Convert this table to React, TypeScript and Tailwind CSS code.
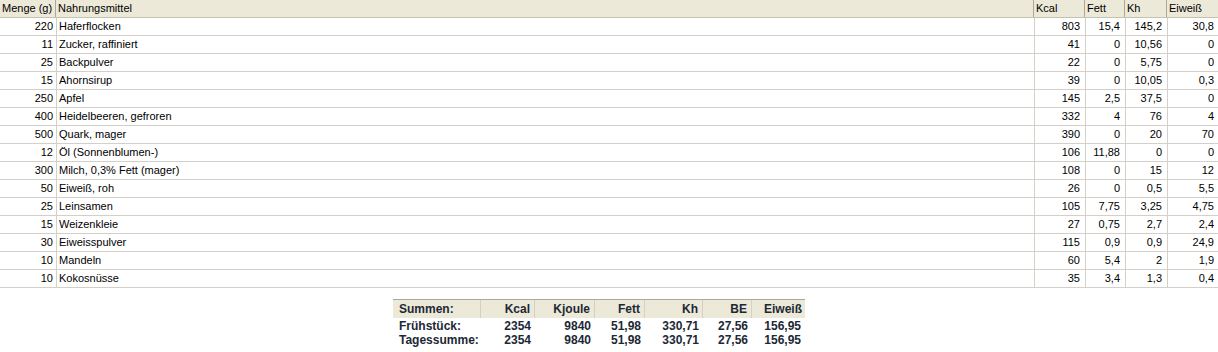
import React from 'react';

const rows: [string, string, string, string, string, string][] = [
  ['220', 'Haferflocken', '803', '15,4', '145,2', '30,8'],
  ['11', 'Zucker, raffiniert', '41', '0', '10,56', '0'],
  ['25', 'Backpulver', '22', '0', '5,75', '0'],
  ['15', 'Ahornsirup', '39', '0', '10,05', '0,3'],
  ['250', 'Apfel', '145', '2,5', '37,5', '0'],
  ['400', 'Heidelbeeren, gefroren', '332', '4', '76', '4'],
  ['500', 'Quark, mager', '390', '0', '20', '70'],
  ['12', 'Öl (Sonnenblumen-)', '106', '11,88', '0', '0'],
  ['300', 'Milch, 0,3% Fett (mager)', '108', '0', '15', '12'],
  ['50', 'Eiweiß, roh', '26', '0', '0,5', '5,5'],
  ['25', 'Leinsamen', '105', '7,75', '3,25', '4,75'],
  ['15', 'Weizenkleie', '27', '0,75', '2,7', '2,4'],
  ['30', 'Eiweisspulver', '115', '0,9', '0,9', '24,9'],
  ['10', 'Mandeln', '60', '5,4', '2', '1,9'],
  ['10', 'Kokosnüsse', '35', '3,4', '1,3', '0,4'],
];

const sums: string[][] = [
  ['Frühstück:', '2354', '9840', '51,98', '330,71', '27,56', '156,95'],
  ['Tagessumme:', '2354', '9840', '51,98', '330,71', '27,56', '156,95'],
];

const grid = 'grid grid-cols-[56px_978px_51px_40px_42px_1fr]';
const sumGrid = 'grid grid-cols-[88px_54px_60px_50px_58px_49px_53px]';

export default function App() {
  return (
    <div className="w-[1218px] h-[352px] bg-white text-black text-[11px] font-['Liberation_Sans',Arial,sans-serif] overflow-hidden">
      {/* Food list */}
      <div className={`${grid} h-[18px] bg-[#ece9d8] border-b border-[#c5c2b2] leading-[17px]`}>
        <div className="pl-[2px] border-r border-[#aca899]">Menge (g)</div>
        <div className="pl-[2px] border-r border-[#aca899]">Nahrungsmittel</div>
        <div className="pl-[2px] border-r border-[#aca899]">Kcal</div>
        <div className="pl-[2px] border-r border-[#aca899]">Fett</div>
        <div className="pl-[2px] border-r border-[#aca899]">Kh</div>
        <div className="pl-[2px]">Eiweiß</div>
      </div>
      {rows.map((r, i) => (
        <div key={i} className={`${grid} h-[18px] border-b border-[#d4d0c8] leading-[17px]`}>
          <div className="text-right pr-[3px]">{r[0]}</div>
          <div className="pl-[2px] border-l border-[#d4d0c8]">{r[1]}</div>
          <div className="text-right pr-[5px] border-l border-[#d4d0c8]">{r[2]}</div>
          <div className="text-right pr-[5px] border-l border-[#d4d0c8]">{r[3]}</div>
          <div className="text-right pr-[5px] border-l border-[#d4d0c8]">{r[4]}</div>
          <div className="text-right pr-[4px] border-l border-[#d4d0c8]">{r[5]}</div>
        </div>
      ))}

      {/* Totals */}
      <div className="ml-[393px] mt-[11px] w-[412px] border-t border-[#aca899] font-bold text-[12px] text-[#1c2836]">
        <div className={`${sumGrid} h-[19px] bg-[#ece9d8] leading-[18px] border-b border-white`}>
          <div className="pl-[6px] border-r border-[#d4d0c8]">Summen:</div>
          <div className="text-right pr-[4px] border-r border-[#d4d0c8]">Kcal</div>
          <div className="text-right pr-[4px] border-r border-[#d4d0c8]">Kjoule</div>
          <div className="text-right pr-[4px] border-r border-[#d4d0c8]">Fett</div>
          <div className="text-right pr-[4px] border-r border-[#d4d0c8]">Kh</div>
          <div className="text-right pr-[4px] border-r border-[#d4d0c8]">BE</div>
          <div className="text-right pr-[3px]">Eiweiß</div>
        </div>
        {sums.map((s, i) => (
          <div key={i} className={`${sumGrid} h-[14px] leading-[14px]`}>
            <div className="pl-[6px]">{s[0]}</div>
            {s.slice(1).map((v, j) => (
              <div key={j} className="text-right pr-[4px]">{v}</div>
            ))}
          </div>
        ))}
      </div>
    </div>
  );
}
